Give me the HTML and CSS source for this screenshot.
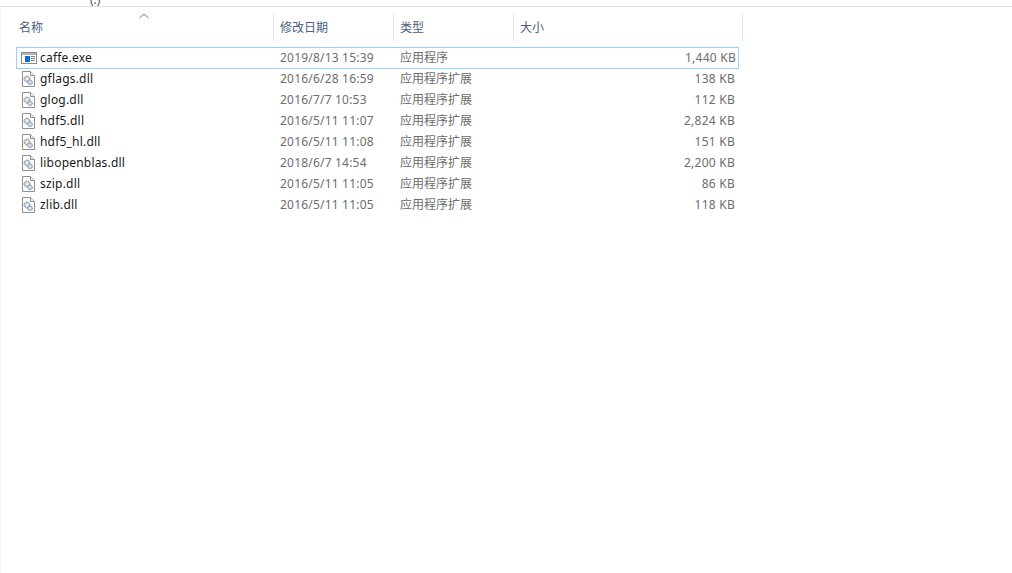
FILE: index.html
```html
<!DOCTYPE html>
<html lang="zh">
<head>
<meta charset="utf-8">
<title>文件列表</title>
<link rel="stylesheet" href="styles.css">
</head>
<body>
<svg width="0" height="0" class="defs">
  <defs>
    <symbol id="dll" viewBox="0 0 13 16">
      <path d="M.5.5h8l4 4v11H.5z" fill="#fff" stroke="#8f8f8f"/>
      <path d="M8.5.5v4h4" fill="#eee" stroke="#8f8f8f"/>
      <circle cx="5" cy="8" r="3" fill="#d0d0d0" stroke="#8c8c8c" stroke-dasharray="1.5 .6"/>
      <circle cx="5" cy="8" r="1" fill="#fff"/>
      <circle cx="8" cy="11.3" r="2.4" fill="#b9d0e6" stroke="#7d93a8" stroke-dasharray="1.4 .5"/>
      <circle cx="8" cy="11.3" r=".7" fill="#fff"/>
    </symbol>
    <symbol id="exe" viewBox="0 0 16 12">
      <rect x=".5" y=".5" width="15" height="11" fill="#fff" stroke="#8c8c8c"/>
      <rect x="1" y="1" width="14" height="2" fill="#b5b5b5"/>
      <rect x="4" y="4" width="5" height="6" fill="#0a6ed1"/>
      <path d="M10 4.5h4M10 6.5h4M10 8.5h4" stroke="#7d7d7d"/>
    </symbol>
  </defs>
</svg>
<div class="crumb">(.)</div>
<main class="pane">
  <div class="head">
    <div class="hcell name">名称<span class="sort"><svg width="10" height="6" viewBox="0 0 10 6"><path d="M.5 5 5 1l4.5 4" fill="none" stroke="#7a7a7a"/></svg></span></div>
    <div class="hcell">修改日期</div>
    <div class="hcell">类型</div>
    <div class="hcell last">大小</div>
  </div>
  <div class="rows">
    <div class="row selected"><span class="name"><svg class="ico exe" width="16" height="12"><use href="#exe"/></svg><span class="fn">caffe.exe</span></span><span class="date">2019/8/13 15:39</span><span class="type">应用程序</span><span class="size">1,440 KB</span></div>
    <div class="row"><span class="name"><svg class="ico" width="13" height="16"><use href="#dll"/></svg><span class="fn">gflags.dll</span></span><span class="date">2016/6/28 16:59</span><span class="type">应用程序扩展</span><span class="size">138 KB</span></div>
    <div class="row"><span class="name"><svg class="ico" width="13" height="16"><use href="#dll"/></svg><span class="fn">glog.dll</span></span><span class="date">2016/7/7 10:53</span><span class="type">应用程序扩展</span><span class="size">112 KB</span></div>
    <div class="row"><span class="name"><svg class="ico" width="13" height="16"><use href="#dll"/></svg><span class="fn">hdf5.dll</span></span><span class="date">2016/5/11 11:07</span><span class="type">应用程序扩展</span><span class="size">2,824 KB</span></div>
    <div class="row"><span class="name"><svg class="ico" width="13" height="16"><use href="#dll"/></svg><span class="fn">hdf5_hl.dll</span></span><span class="date">2016/5/11 11:08</span><span class="type">应用程序扩展</span><span class="size">151 KB</span></div>
    <div class="row"><span class="name"><svg class="ico" width="13" height="16"><use href="#dll"/></svg><span class="fn">libopenblas.dll</span></span><span class="date">2018/6/7 14:54</span><span class="type">应用程序扩展</span><span class="size">2,200 KB</span></div>
    <div class="row"><span class="name"><svg class="ico" width="13" height="16"><use href="#dll"/></svg><span class="fn">szip.dll</span></span><span class="date">2016/5/11 11:05</span><span class="type">应用程序扩展</span><span class="size">86 KB</span></div>
    <div class="row"><span class="name"><svg class="ico" width="13" height="16"><use href="#dll"/></svg><span class="fn">zlib.dll</span></span><span class="date">2016/5/11 11:05</span><span class="type">应用程序扩展</span><span class="size">118 KB</span></div>
  </div>
</main>
</body>
</html>
```
FILE: styles.css
```css
* { box-sizing: border-box; }
html, body { margin: 0; height: 100%; background: #fff; overflow: hidden; }
body {
  font-family: "Noto Sans", "Noto Sans CJK SC", sans-serif;
  font-size: 12px;
  display: flex;
  flex-direction: column;
  height: 573px;
}
.defs { display: block; height: 0; }
.crumb {
  height: 7px;
  border-bottom: 1px solid #dfdfdf;
  color: #555;
  line-height: 0;
  padding-left: 90px;
  overflow: hidden;
  flex: none;
}
.pane {
  flex: 1;
  border-left: 1px solid #f4f4f4;
  padding: 7px 0 0 0;
}
.head {
  display: grid;
  grid-template-columns: 273px 120px 120px 230px;
  height: 27px;
  width: 743px;
  margin-left: -1px;
  color: #4c607a;
}
.hcell {
  display: flex;
  align-items: center;
  padding-left: 6px;
  border-left: 1px solid #e5e5e5;
  line-height: 27px;
}
.hcell.name {
  border-left: 0;
  padding-left: 19px;
  position: relative;
}
.hcell.last { border-right: 1px solid #e5e5e5; }
.sort {
  position: absolute;
  left: 139px;
  top: -1px;
  line-height: 0;
}
.rows {
  display: flex;
  flex-direction: column;
  margin: 6px 0 0 15px;
  width: 723px;
}
.row {
  display: grid;
  grid-template-columns: 257px 120px 120px 226px;
  height: 21px;
  line-height: 16px;
  align-items: center;
  color: #6d6d6d;
  white-space: nowrap;
}
.row.selected {
  height: 22px;
  margin-bottom: -1px;
  padding-bottom: 1px;
  border: 1px solid #99d1ff;
}
.row .name { display: flex; align-items: center; color: #1a1a1a; padding-left: 6px; }
.row.selected .name { padding-left: 4px; }
.row.selected .date,
.row.selected .type { margin-left: -1px; }
.row .date { padding-left: 7px; letter-spacing: .2px; }
.row .type { padding-left: 7px; }
.ico { flex: none; margin-right: 5px; }
.ico.exe { margin-right: 3px; }
.fn { letter-spacing: .2px; }
.size { text-align: right; padding-right: 4px; letter-spacing: .25px; }
```
